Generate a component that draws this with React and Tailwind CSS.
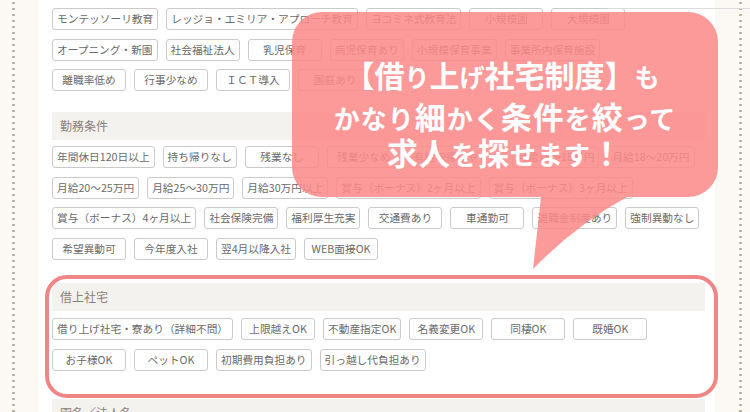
import React from 'react';

// rows are fixed so the wrap matches the screenshot
const topRows = [
  ['モンテッソーリ教育', 'レッジョ・エミリア・アプローチ教育', 'ヨコミネ式教育法', '小規模園', '大規模園'],
  ['オープニング・新園', '社会福祉法人', '乳児保育', '病児保育あり', '小規模保育事業', '事業所内保育施設'],
  ['離職率低め', '行事少なめ', 'ＩＣＴ導入', '園庭あり'],
];

const workRows = [
  ['年間休日120日以上', '持ち帰りなし', '残業なし', '残業少なめ', '有給取得しやすい', '月給15～18万円', '月給18～20万円'],
  ['月給20～25万円', '月給25～30万円', '月給30万円以上', '賞与（ボーナス）2ヶ月以上', '賞与（ボーナス）3ヶ月以上'],
  ['賞与（ボーナス）4ヶ月以上', '社会保険完備', '福利厚生充実', '交通費あり', '車通勤可', '退職金制度あり', '強制異動なし'],
  ['希望異動可', '今年度入社', '翌4月以降入社', 'WEB面接OK'],
];

const houseRows = [
  ['借り上げ社宅・寮あり（詳細不問）', '上限越えOK', '不動産指定OK', '名義変更OK', '同棲OK', '既婚OK'],
  ['お子様OK', 'ペットOK', '初期費用負担あり', '引っ越し代負担あり'],
];

function Chip({ label }) {
  return (
    <span className="h-[22px] min-w-[74px] shrink-0 px-[4px] border border-[#cacaca] rounded-[3px] bg-white text-[10.7px] leading-[20px] text-[#6a6a6a] text-center whitespace-nowrap">
      {label}
    </span>
  );
}

function ChipRows({ rows }) {
  return (
    <div className="flex flex-col gap-y-[8.5px]">
      {rows.map((row, i) => (
        <div key={i} className="flex gap-x-2">
          {row.map((l) => (
            <Chip key={l} label={l} />
          ))}
        </div>
      ))}
    </div>
  );
}

function SectionHead({ title }) {
  return (
    <div className="h-[28px] shrink-0 bg-[#f4f2ef] pl-[8px] flex items-center text-[12px] text-[#8b8179]">
      {title}
    </div>
  );
}

function Dots() {
  return <div className="w-[3px] h-full bg-[radial-gradient(circle,#b3a99f_1px,transparent_1.5px)] bg-[length:3px_6px]" />;
}

const Big = ({ children, size = 'text-[31px]' }) => <span className={size}>{children}</span>;
const Small = ({ children, size = 'text-[26px]' }) => <span className={size}>{children}</span>;

function Bubble() {
  return (
    <div className="absolute left-[292px] top-[12px] w-[426px] h-[260px]">
      <svg width="426" height="260" viewBox="0 0 426 260" className="absolute inset-0">
        <path
          d="M30,0 H396 A30,30 0 0 1 426,30 V155 A30,30 0 0 1 396,185 H335 Q285,212 241,257 L249,185 H30 A30,30 0 0 1 0,155 V30 A30,30 0 0 1 30,0 Z"
          fill="#fb8a8a"
          fillOpacity="0.87"
        />
      </svg>
      <div className="relative w-[426px] h-[185px] flex flex-col items-center pt-[44px] text-white font-bold">
        <div className="leading-[36px] pr-[6px]">
          <Big size="text-[30px]">【借</Big><Small size="text-[25px]">り</Small><Big size="text-[30px]">上</Big>
          <Small size="text-[25px]">げ</Small><Big size="text-[30px]">社宅制度】</Big><Small size="text-[25px]">も</Small>
        </div>
        <div className="leading-[36px] tracking-[1px]">
          <Small>かなり</Small><Big>細</Big><Small>かく</Small><Big>条件</Big><Small>を</Small><Big>絞</Big><Small>って</Small>
        </div>
        <div className="leading-[36px] tracking-[1px] -mt-[6px]">
          <Big>求人</Big><Small>を</Small><Big>探</Big><Small>せます</Small><Big>！</Big>
        </div>
      </div>
    </div>
  );
}

export default function App() {
  return (
    <div className="relative w-[750px] h-[412px] overflow-hidden flex bg-white font-['Noto_Sans_CJK_JP','Noto_Sans',sans-serif]">
      <div className="w-[38px] shrink-0 bg-[#fcf8f3] pl-[12px]">
        <Dots />
      </div>

      <div className="flex-1 min-w-0 flex flex-col pl-[14px] pr-[10px] pt-[8px]">
        <ChipRows rows={topRows} />

        <div className="mt-[21px]">
          <SectionHead title="勤務条件" />
        </div>
        <div className="mt-[6px]">
          <ChipRows rows={workRows} />
        </div>

        <div className="relative mt-[23.5px]">
          <SectionHead title="借上社宅" />
          <div className="mt-[7px]">
            <ChipRows rows={houseRows} />
          </div>
          <div className="absolute -left-[7px] -right-[13px] -top-[8px] -bottom-[27px] border-[4px] border-[#f08585] rounded-[22px]" />
        </div>

        <div className="mt-[28px]">
          <SectionHead title="園名／法人名" />
        </div>
      </div>

      <div className="w-[35px] shrink-0 bg-[#fcf8f3] pl-[24px]">
        <Dots />
      </div>

      <div className="absolute top-[8px] right-0 w-[142px] h-px bg-[#dcdcdc]" />
      <Bubble />
    </div>
  );
}
